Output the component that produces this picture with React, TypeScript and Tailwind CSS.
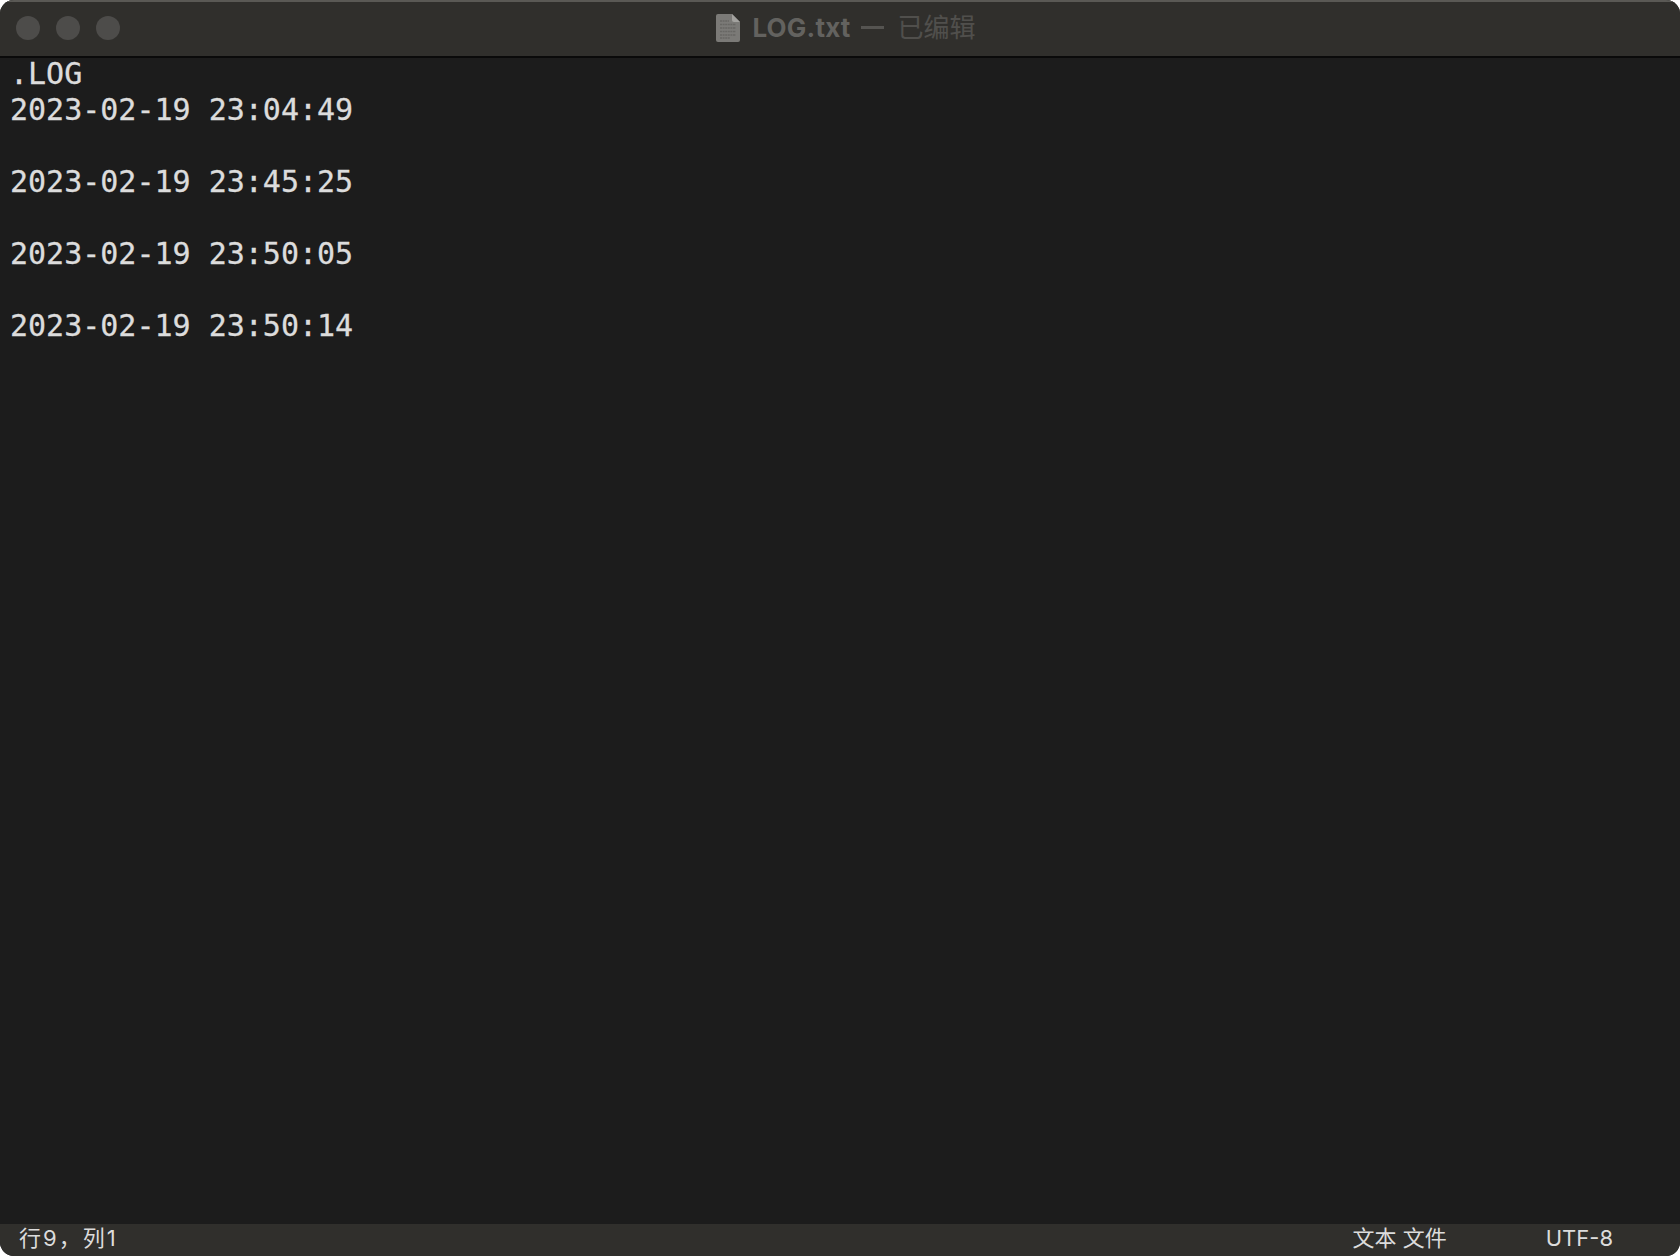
export default function App() {
  const lines = [".LOG", "2023-02-19 23:04:49", "\u00a0", "2023-02-19 23:45:25", "\u00a0", "2023-02-19 23:50:05", "\u00a0", "2023-02-19 23:50:14"];
  return (
    <div className="h-[1256px] w-[1680px] overflow-hidden bg-white">
      <div className="flex h-full w-full flex-col overflow-hidden rounded-[14px] bg-[#1c1c1c]">
        <div className="relative flex h-[58px] shrink-0 items-center justify-center border-t-2 border-b-2 border-t-[#5a5955] border-b-[#0a0a0a] bg-[#302f2c]">
          <div className="absolute left-[16px] top-[14px] flex gap-[16px]">
            <div className="h-[24px] w-[24px] rounded-full bg-[#4d4c4a]" />
            <div className="h-[24px] w-[24px] rounded-full bg-[#4d4c4a]" />
            <div className="h-[24px] w-[24px] rounded-full bg-[#4d4c4a]" />
          </div>
          <div className="flex items-center pb-[3px] pl-[12px] font-['Inter','Noto_Sans_CJK_SC',sans-serif] text-[26px] text-[#504f4c]">
            <svg width="24" height="28" viewBox="0 0 24 28" className="mr-[12px]">
              <path d="M2 0h14l8 8v18a2 2 0 0 1-2 2H2a2 2 0 0 1-2-2V2a2 2 0 0 1 2-2z" fill="#7b7a77" />
              <path d="M16 0l8 8h-6a2 2 0 0 1-2-2z" fill="#a3a29f" />
              <path d="M4 7h9M4 10.5h16M4 14h16M4 17.5h16M4 21h16M4 24h10" stroke="#686764" strokeWidth="1.4" strokeDasharray="2 .6" />
            </svg>
            <span className="font-bold tracking-[0.2px] text-[#63625f]">LOG.txt</span>
            <span className="ml-[10px] mr-[14px] h-[3px] w-[23px] bg-[#555451]" />
            <span>已编辑</span>
          </div>
        </div>
        <div className="min-h-0 flex-1 px-[10px] font-['DejaVu_Sans_Mono',monospace] text-[30px] leading-[36px] text-[#dcdcdc] [-webkit-text-stroke:0.3px_#dcdcdc]">
          <div className="-mt-[2px]">
            {lines.map((l, i) => <div key={i} className="whitespace-pre">{l}</div>)}
          </div>
        </div>
        <div className="flex h-[32px] shrink-0 items-center bg-[#302f2c] pb-[3px] pl-[19px] font-['Inter','Noto_Sans_CJK_SC',sans-serif] text-[22px] text-[#dcdcdc]">
          <span className="tracking-[2px]">行9，列1</span>
          <span className="ml-auto">文本 文件</span>
          <span className="ml-[99px] mr-[67px]">UTF-8</span>
        </div>
      </div>
    </div>
  );
}
